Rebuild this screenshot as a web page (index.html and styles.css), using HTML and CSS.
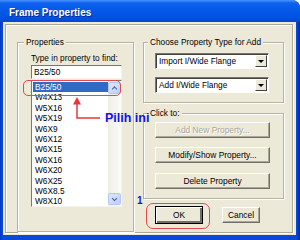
FILE: index.html
```html
<!DOCTYPE html>
<html lang="en">
<head>
    <meta charset="UTF-8">
    <title>Frame Properties</title>
    <link rel="stylesheet" href="styles.css">
</head>
<body>
    <div class="window">
        <div class="titlebar">Frame Properties</div>
        <div class="client">
            <div class="panel">
                <fieldset class="group group-props">
                    <legend>Properties</legend>
                    <div class="field-label">Type in property to find:</div>
                    <div class="textbox">B25/50</div>
                    <div class="listbox">
                        <ul class="list-items">
                            <li class="selected">B25/50</li>
                            <li>W4X13</li>
                            <li>W5X16</li>
                            <li>W5X19</li>
                            <li>W6X9</li>
                            <li>W6X12</li>
                            <li>W6X15</li>
                            <li>W6X16</li>
                            <li>W6X20</li>
                            <li>W6X25</li>
                            <li>W6X8.5</li>
                            <li>W8X10</li>
                        </ul>
                        <div class="vscroll">
                            <span class="sb-btn sb-up"></span>
                            <span class="sb-track"></span>
                            <span class="sb-btn sb-down"></span>
                        </div>
                    </div>
                </fieldset>

                <div class="right-col">
                    <fieldset class="group group-type">
                        <legend>Choose Property Type for Add</legend>
                        <div class="combo">
                            <span class="combo-text">Import I/Wide Flange</span>
                            <span class="combo-btn"></span>
                        </div>
                        <div class="combo combo-second">
                            <span class="combo-text">Add I/Wide Flange</span>
                            <span class="combo-btn"></span>
                        </div>
                    </fieldset>

                    <fieldset class="group group-click">
                        <legend>Click to:</legend>
                        <button class="btn btn-wide" disabled>Add New Property...</button>
                        <button class="btn btn-wide btn-gap1">Modify/Show Property...</button>
                        <button class="btn btn-wide btn-gap2">Delete Property</button>
                    </fieldset>

                    <div class="dialog-buttons">
                        <button class="btn btn-ok">OK</button>
                        <button class="btn btn-cancel">Cancel</button>
                    </div>
                </div>
            </div>
        </div>

        <!-- tutorial annotations drawn over the dialog -->
        <div class="mark mark-select"></div>
        <svg class="arrow" width="32" height="26" viewBox="0 0 32 26">
            <path d="M5 7 V22 H28" fill="none" stroke="#e8363e" stroke-width="1.5"/>
            <path d="M1 8.5 L5 1 L9 8.5 Z" fill="#e8363e"/>
        </svg>
        <div class="note note-pilih">Pilih ini</div>
        <div class="note note-num">1</div>
        <div class="mark mark-ok"></div>
    </div>
</body>
</html>
```

FILE: styles.css
```css
/* Frame Properties dialog (XP look) */
* {
    box-sizing: border-box;
}

body {
    margin: 0;
    width: 300px;
    height: 240px;
    overflow: hidden;
    background: #ffffff;
    font-family: "Liberation Sans", Arial, sans-serif;
    font-size: 8.3px;
    color: #000;
}

.window {
    position: relative;
    width: 300px;
    height: 240px;
    display: flex;
    flex-direction: column;
    background: linear-gradient(90deg, #0837c8 0, #0a4ad8 3px, #0a4ad8 296px, #0b3bc0 298px, #06289a 300px);
    border-top-right-radius: 8px;
    overflow: hidden;
}

.titlebar {
    height: 22px;
    flex: none;
    padding: 6px 0 0 9px;
    line-height: 14px;
    font-size: 10px;
    font-weight: bold;
    color: #fff;
    text-shadow: 1px 1px 0 #0a2a8a;
    background: linear-gradient(#4a93ff 0, #0d62ee 3px, #0558e8 45%, #0052e2 80%, #0846cc 100%);
}

.client {
    flex: 1;
    margin: 0 4px 5px 3px;
    padding: 2px 3px 2px 2px;
    background: #ece9d8;
}

.panel {
    display: flex;
    height: 100%;
    padding: 12px 9px 0 11px;
    border: 1px solid #aca899;
    box-shadow: inset 1px 1px 0 #fff, 1px 1px 0 #fff;
}

/* group boxes */
.group {
    margin: 0;
    border: 1px solid #b5b2a3;
    box-shadow: inset 1px 1px 0 #fff, 1px 1px 0 #fff;
}

.group legend {
    margin-left: -7px;
    padding: 0 2px;
    line-height: 10px;
    background: #ece9d8;
}

.group-props {
    width: 117px;
    flex: none;
    padding: 6px 10px 12px 13px;
}

.field-label {
    line-height: 10px;
    white-space: nowrap;
}

.textbox {
    width: 91px;
    height: 14px;
    margin-top: 2px;
    padding-left: 2px;
    line-height: 12px;
    background: #fff;
    border: 1px solid;
    border-color: #7a786c #f4f3ee #f4f3ee #7a786c;
}

.listbox {
    display: flex;
    width: 91px;
    height: 127px;
    margin-top: 1px;
    background: #fff;
    border: 1px solid;
    border-color: #7a786c #f4f3ee #f4f3ee #7a786c;
}

.list-items {
    flex: 1;
    margin: 0;
    padding: 1px 0 0 1px;
    list-style: none;
}

.list-items li {
    height: 10.4px;
    padding-left: 2px;
    line-height: 10.4px;
}

.list-items li.selected {
    background: #316ac5;
    color: #fff;
}

.vscroll {
    width: 13px;
    flex: none;
    display: flex;
    flex-direction: column;
    padding: 1px 0;
    background: linear-gradient(90deg, #eeede5, #fbfbf8);
}

.sb-btn {
    height: 12px;
    flex: none;
    border-radius: 2px;
    border: 1px solid #b4c8f6;
    background: linear-gradient(135deg, #dde8fe, #bccffa);
    position: relative;
}

.sb-btn::after {
    content: "";
    position: absolute;
    left: 3px;
    top: 3px;
    width: 3px;
    height: 3px;
    border: solid #4d6185;
    border-width: 1.5px 1.5px 0 0;
}

.sb-up::after {
    transform: translate(0.5px, 1px) rotate(-45deg);
}

.sb-down::after {
    transform: translate(0.5px, -0.5px) rotate(135deg);
}

.sb-track {
    flex: 1;
}

/* right column */
.right-col {
    width: 141px;
    flex: none;
    margin-left: 9px;
}

.group-type {
    padding: 6px 14px 9px 11px;
}

.combo {
    display: flex;
    width: 114px;
    height: 16px;
    background: #fff;
    border: 1px solid;
    border-color: #7a786c #fff #fff #7a786c;
    box-shadow: inset 1px 1px 0 #404040;
}

.combo-second {
    margin-top: 8px;
}

.combo-text {
    flex: 1;
    padding: 1px 0 0 3px;
    line-height: 13px;
    white-space: nowrap;
}

.combo-btn {
    width: 12px;
    flex: none;
    margin: 1px 1px 1px 0;
    position: relative;
    background: #ece9d8;
    border: 1px solid;
    border-color: #fff #404040 #404040 #fff;
}

.combo-btn::after {
    content: "";
    position: absolute;
    left: 2px;
    top: 4px;
    border: 3px solid transparent;
    border-top: 3px solid #000;
    border-bottom: 0;
}

.group-click {
    margin-top: 5px;
    padding: 4px 13px 9px 11px;
}

.btn {
    display: block;
    margin: 0;
    padding: 0;
    font-family: inherit;
    font-size: 8.4px;
    color: #000;
    background: #ece9d8;
    border: 1px solid;
    border-color: #fff #716f64 #716f64 #fff;
    box-shadow: inset -1px -1px 0 #aca899;
    border-radius: 0;
}

.btn-wide {
    width: 115px;
    height: 16px;
}

.btn-gap1 {
    margin-top: 9px;
}

.btn-gap2 {
    margin-top: 10px;
}

.btn:disabled {
    color: #aca899;
    text-shadow: 1px 1px 0 #fff;
}

.dialog-buttons {
    display: flex;
    margin-top: 7px;
    padding-left: 12px;
}

.btn-ok {
    width: 48px;
    height: 18px;
    border-color: #000;
    box-shadow: inset 1px 1px 0 #fff, inset -2px -2px 0 #716f64;
}

.btn-cancel {
    width: 38px;
    height: 16px;
    margin: 1px 0 0 19px;
}

/* annotations */
.mark {
    position: absolute;
    border: 1.5px solid #e24a4e;
    border-radius: 5px;
}

.mark-select {
    left: 23px;
    top: 80px;
    width: 98px;
    height: 16px;
}

.mark-ok {
    left: 146px;
    top: 203px;
    width: 64px;
    height: 26px;
    border-radius: 7px;
}

.arrow {
    position: absolute;
    left: 72px;
    top: 96px;
}

.note {
    position: absolute;
    font-weight: bold;
    color: #1212e8;
    line-height: 1;
}

.note-pilih {
    left: 105px;
    top: 112px;
    font-size: 12.5px;
}

.note-num {
    left: 137px;
    top: 196px;
    font-size: 10px;
}
```
